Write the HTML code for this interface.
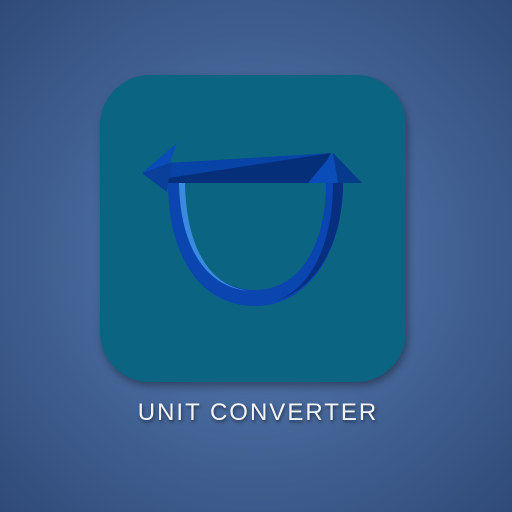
<!DOCTYPE html>
<html><head><style>
html,body{margin:0;padding:0;}
body{width:512px;height:512px;overflow:hidden;background:radial-gradient(circle at 50% 50%,#5579a6 0%,#46679a 45%,#2f4a78 100%);position:relative;font-family:"Liberation Sans",sans-serif;}
.sq{position:absolute;left:100px;top:75px;width:306px;height:307px;border-radius:50px;background:#0b6482;box-shadow:2px 4px 8px rgba(0,0,0,0.35);}
.t{position:absolute;left:0;width:512px;top:399px;text-align:center;color:#f2f4f8;font-size:24px;letter-spacing:2px;text-shadow:1px 2px 3px rgba(0,0,0,0.5);padding-left:2px;}
svg{position:absolute;left:0;top:0;}
</style></head><body>
<div class="sq"></div>
<svg width="512" height="512" viewBox="0 0 512 512">
  <path d="M168 183 C168 255 200 306 255 306 C310 306 343 250 343 183 L326 183 C326 245 300 290 255 290 C210 290 182 245 182 183 Z" fill="#0a45b0"/>
  <path d="M179 183 C180 245 205 288 250 291 C205 286 186 240 185 183 Z" fill="#3a8ae0"/>
  <path d="M333 183 C333 245 310 290 275 301 C315 290 343 245 343 183 Z" fill="#062f80"/>
  <path d="M168 163 L331 153 L315 183 L168 183 Z" fill="#0843a8"/>
  <path d="M331 153 L168 178 L168 183 L315 183 Z" fill="#062f7a"/>
  <path d="M142 173 L177 143 L170 162 L168 183 L167 192 Z" fill="#0a4cb8"/>
  <path d="M142 173 L172 162 L168 183 L167 192 Z" fill="#0a3f9a"/>
  <path d="M333 153 L308 183 L362 183 Z" fill="#0a4cb8"/>
  <path d="M333 153 L338 183 L362 183 Z" fill="#063a8c"/>
</svg>
<div class="t">UNIT CONVERTER</div>
</body></html>
